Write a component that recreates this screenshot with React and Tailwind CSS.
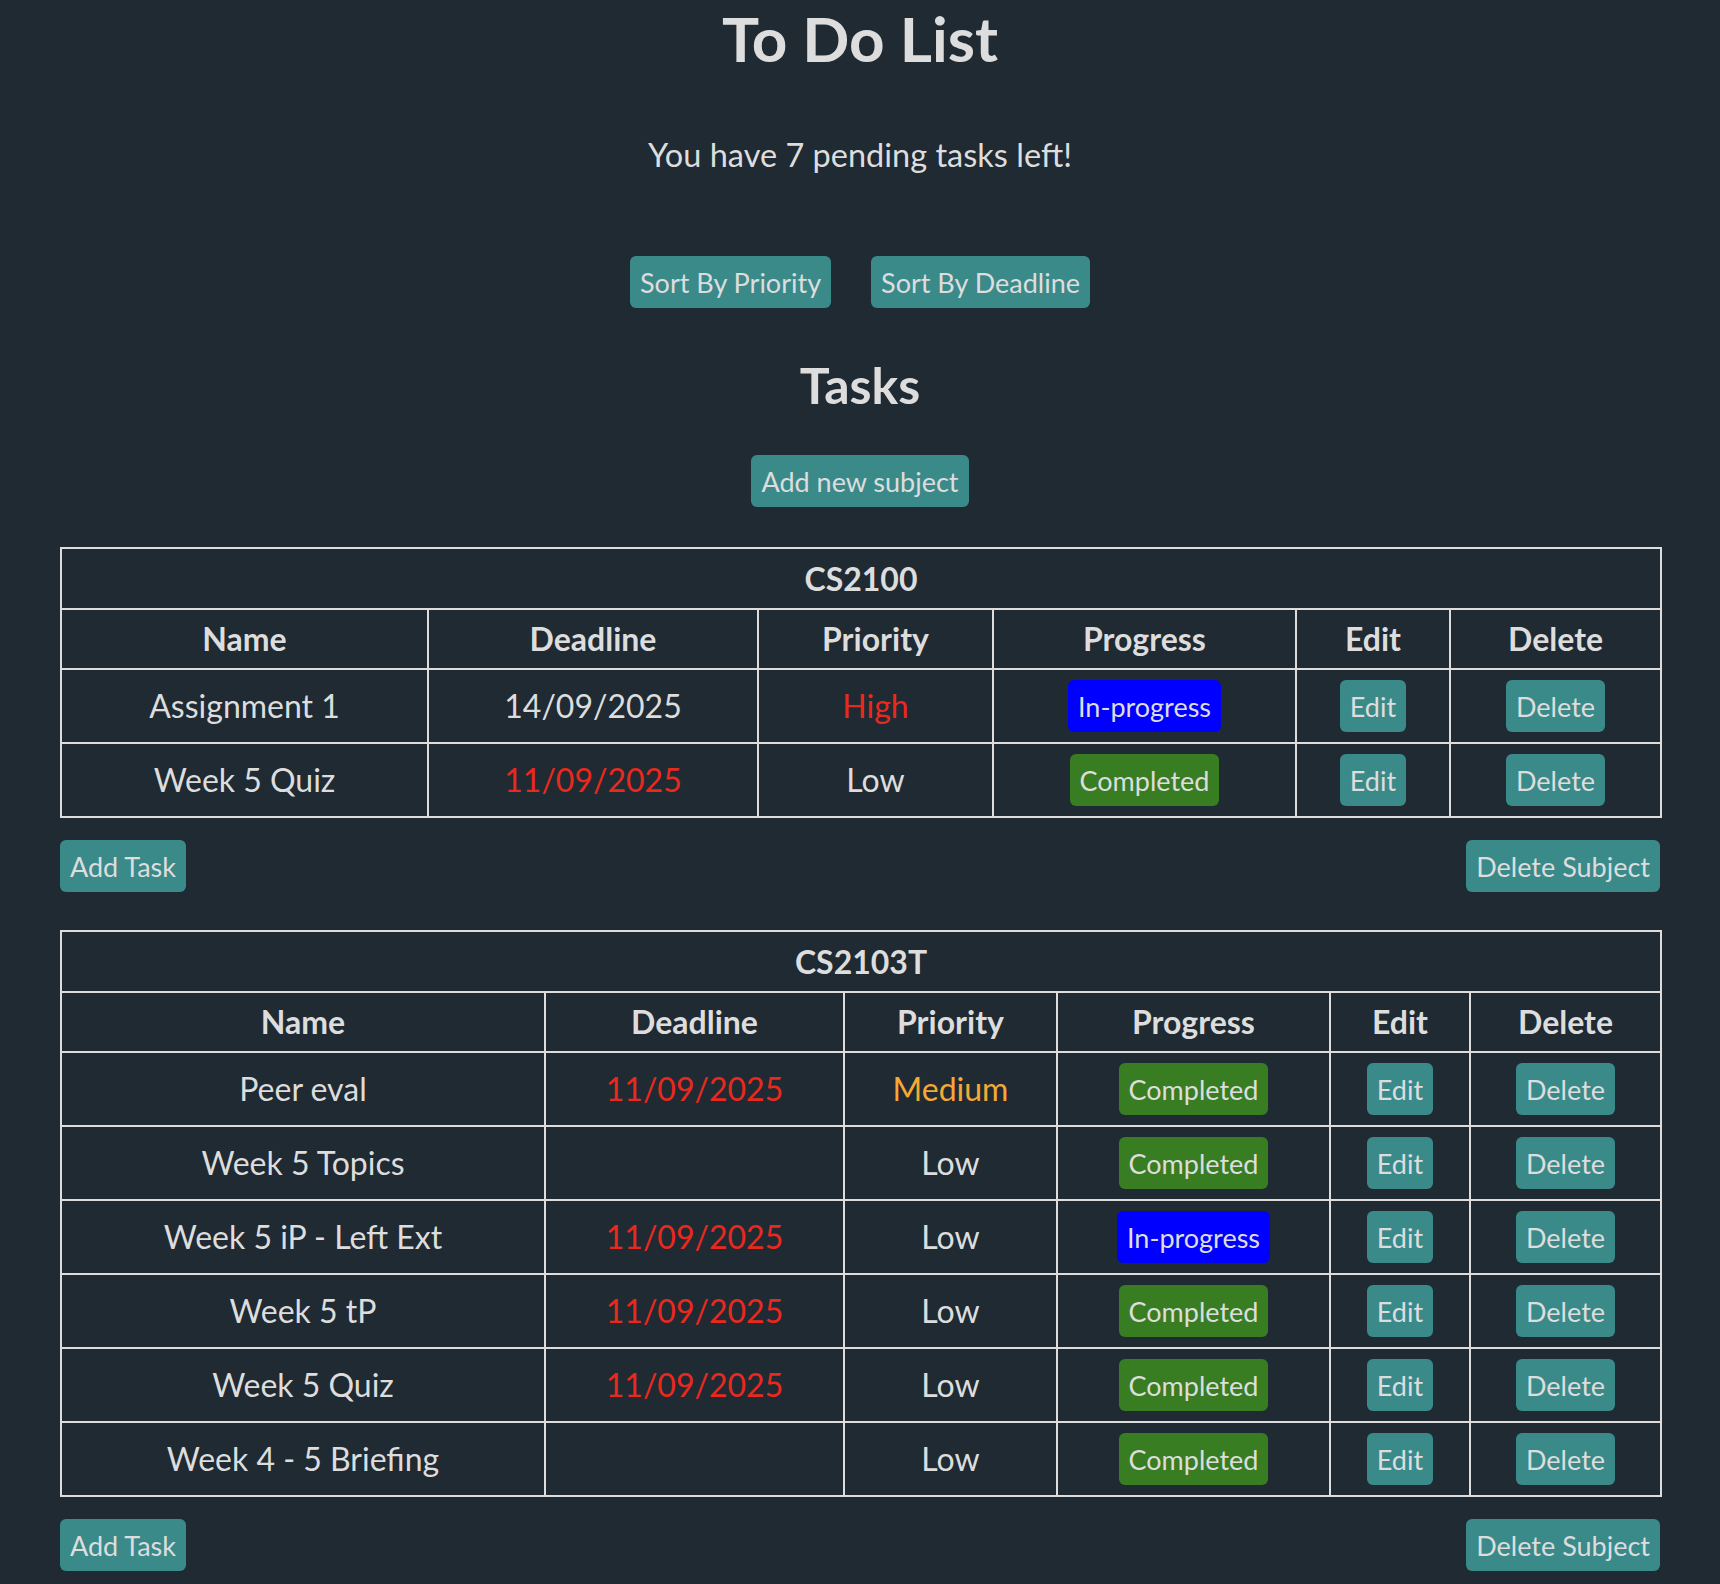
import React from 'react';

const subjects = [
  {
    code: 'CS2100',
    cols: ['w-[367px]', 'w-[330px]', 'w-[235px]', 'w-[303px]', 'w-[154px]', 'w-[211px]'],
    tasks: [
      { name: 'Assignment 1', deadline: '14/09/2025', overdue: false, priority: 'High', progress: 'In-progress' },
      { name: 'Week 5 Quiz', deadline: '11/09/2025', overdue: true, priority: 'Low', progress: 'Completed' },
    ],
  },
  {
    code: 'CS2103T',
    cols: ['w-[484px]', 'w-[299px]', 'w-[213px]', 'w-[273px]', 'w-[140px]', 'w-[191px]'],
    tasks: [
      { name: 'Peer eval', deadline: '11/09/2025', overdue: true, priority: 'Medium', progress: 'Completed' },
      { name: 'Week 5 Topics', deadline: '', overdue: false, priority: 'Low', progress: 'Completed' },
      { name: 'Week 5 iP - Left Ext', deadline: '11/09/2025', overdue: true, priority: 'Low', progress: 'In-progress' },
      { name: 'Week 5 tP', deadline: '11/09/2025', overdue: true, priority: 'Low', progress: 'Completed' },
      { name: 'Week 5 Quiz', deadline: '11/09/2025', overdue: true, priority: 'Low', progress: 'Completed' },
      { name: 'Week 4 - 5 Briefing', deadline: '', overdue: false, priority: 'Low', progress: 'Completed' },
    ],
  },
];

const priorityColor = {
  High: 'text-[#e9291e]',
  Medium: 'text-[#f4a936]',
  Low: 'text-[#ddd]',
};

const Button = ({ children, className = '' }) => (
  <button className={`h-[52px] px-[10px] rounded-md bg-[#3b8a8a] text-[#ddd] text-[27px] leading-none ${className}`}>
    {children}
  </button>
);

const Badge = ({ progress }) => (
  <span
    className={`inline-flex items-center h-[52px] px-[10px] rounded-md text-[27px] leading-none text-[#ddd] ${
      progress === 'Completed' ? 'bg-[#387d22]' : 'bg-[#0000ff]'
    }`}
  >
    {progress}
  </span>
);

const cell = 'border-2 border-[#ddd] text-center align-middle';

const SubjectTable = ({ subject }) => (
  <div>
    <table className="w-full table-fixed border-collapse">
      <colgroup>
        {subject.cols.map((c, i) => (
          <col key={i} className={c} />
        ))}
      </colgroup>
      <thead>
        <tr className="h-[61px]">
          <th colSpan={6} className={`${cell} text-[32px] font-bold`}>
            {subject.code}
          </th>
        </tr>
        <tr className="h-[60px]">
          {['Name', 'Deadline', 'Priority', 'Progress', 'Edit', 'Delete'].map((h) => (
            <th key={h} className={`${cell} text-[32px] font-bold`}>
              {h}
            </th>
          ))}
        </tr>
      </thead>
      <tbody>
        {subject.tasks.map((t, i) => (
          <tr key={i} className="h-[74px] text-[32px]">
            <td className={cell}>{t.name}</td>
            <td className={`${cell} ${t.overdue ? 'text-[#e9291e]' : ''}`}>{t.deadline}</td>
            <td className={`${cell} ${priorityColor[t.priority]}`}>{t.priority}</td>
            <td className={cell}>
              <Badge progress={t.progress} />
            </td>
            <td className={cell}>
              <Button>Edit</Button>
            </td>
            <td className={cell}>
              <Button>Delete</Button>
            </td>
          </tr>
        ))}
      </tbody>
    </table>
    <div className="mt-[22px] flex justify-between">
      <Button>Add Task</Button>
      <Button>Delete Subject</Button>
    </div>
  </div>
);

export default function App() {
  return (
    <div className="min-h-screen bg-[#1f2a33] text-[#ddd] font-['Lato',sans-serif] pb-[13px]">
      <div className="flex flex-col items-center">
        <h1 className="text-[62px] leading-[76px] font-bold">To Do List</h1>
        <p className="mt-[59px] text-[32.5px] leading-[40px]">You have 7 pending tasks left!</p>
        <div className="mt-[81px] flex gap-[40px]">
          <Button>Sort By Priority</Button>
          <Button>Sort By Deadline</Button>
        </div>
        <h2 className="mt-[47px] text-[50px] leading-[60px] font-bold">Tasks</h2>
        <Button className="mt-[40px]">Add new subject</Button>
        <div className="mt-[40px] w-[1600px] flex flex-col gap-[38px]">
          {subjects.map((s) => (
            <SubjectTable key={s.code} subject={s} />
          ))}
        </div>
      </div>
    </div>
  );
}
